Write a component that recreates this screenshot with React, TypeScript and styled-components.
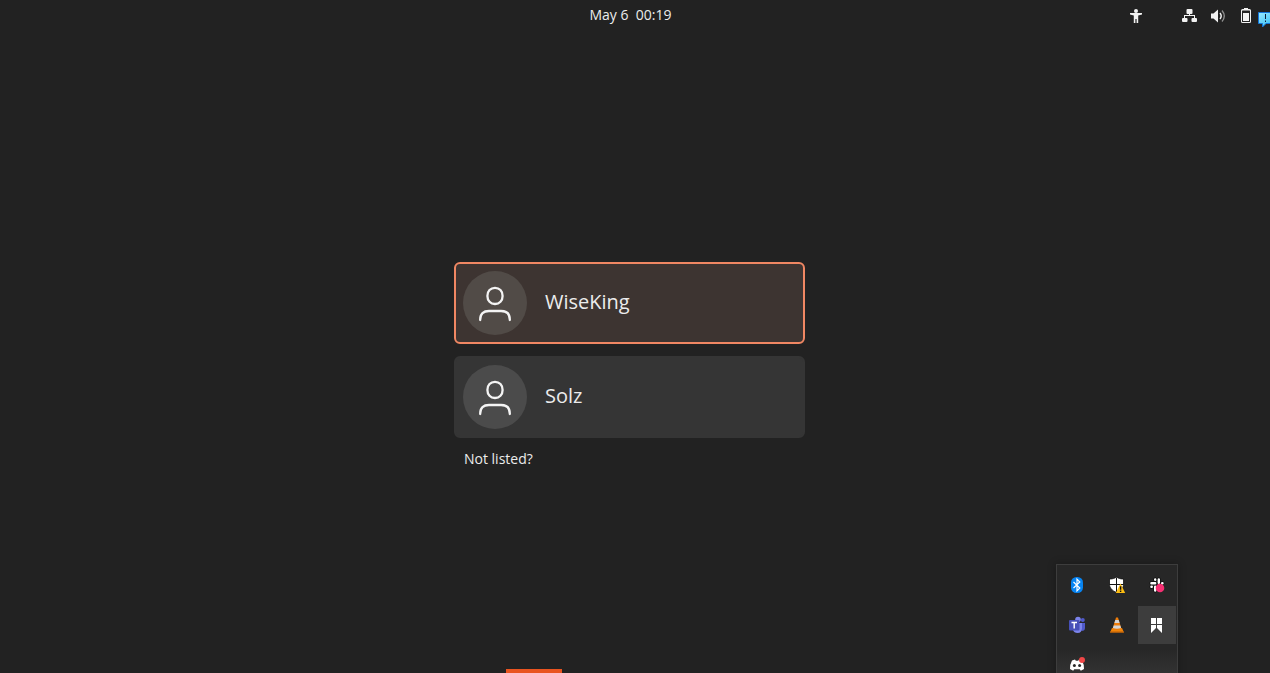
import React from "react";
import styled, { createGlobalStyle, css } from "styled-components";

const GlobalStyle = createGlobalStyle`
  * { box-sizing: border-box; }
  html, body { margin: 0; background: #222222; }
  body {
    font-family: "Open Sans", "Noto Sans", sans-serif;
    color: #ececec;
    overflow: hidden;
  }
  button { font: inherit; color: inherit; border: 0; padding: 0; background: none; cursor: pointer; }
`;

const Screen = styled.div`
  position: relative;
  display: flex;
  flex-direction: column;
  min-height: 100vh;
  overflow: hidden;
`;

const TopBar = styled.header`
  display: grid;
  grid-template-columns: 1fr auto 1fr;
  align-items: center;
  height: 32px;
`;

const Clock = styled.button`
  grid-column: 2;
  margin-right: 9px;
  padding-bottom: 2px;
  font-size: 14px;
  line-height: 28px;
  white-space: pre;
`;

const StatusArea = styled.div`
  display: flex;
  justify-content: flex-end;
  align-items: center;
  gap: 12px;
  padding-right: 16px;
`;

const StatusButton = styled.button<{ $spaced?: boolean }>`
  display: flex;
  margin-right: ${(p) => (p.$spaced ? "26px" : "0")};
`;

const Login = styled.main`
  flex: 1;
  display: flex;
  flex-direction: column;
  justify-content: center;
  align-items: center;
  padding: 25px 1px 0 0;
`;

const LoginColumn = styled.div`
  display: flex;
  flex-direction: column;
  gap: 12px;
  width: 100%;
  max-width: 351px;
  margin-right: 10px;
`;

const UserCard = styled.button<{ $selected?: boolean }>`
  display: flex;
  align-items: center;
  gap: 18px;
  height: 82px;
  padding: 0 7px;
  border: 2px solid #353535;
  border-radius: 6px;
  background: #353535;
  text-align: left;
  ${(p) =>
    p.$selected &&
    css`
      border-color: #f08763;
      background: #3d3431;
    `}
`;

const Avatar = styled.span<{ $selected?: boolean }>`
  display: flex;
  align-items: center;
  justify-content: center;
  width: 64px;
  height: 64px;
  border-radius: 50%;
  background: ${(p) => (p.$selected ? "#514b47" : "#4b4b4b")};
`;

const UserName = styled.span`
  padding-bottom: 3px;
  font-size: 20px;
  font-weight: 400;
  line-height: 28px;
`;

const NotListed = styled.button`
  align-self: flex-start;
  margin-left: 10px;
  font-size: 14px;
  line-height: 18px;
`;

const Tray = styled.div`
  position: absolute;
  right: 92px;
  bottom: -13px;
  display: grid;
  grid-template-columns: repeat(3, 38px);
  grid-auto-rows: 38px;
  gap: 2px;
  padding: 1px;
  border: 1px solid #3d3d3d;
  background: linear-gradient(#272727 84px, #333333 110px);
  box-shadow: 0 0 8px rgba(0, 0, 0, 0.3);
`;

const TrayButton = styled.button<{ $active?: boolean }>`
  display: flex;
  align-items: center;
  justify-content: center;
  background: ${(p) => (p.$active ? "#3d3d3d" : "transparent")};
`;

const Notice = styled.div`
  position: absolute;
  top: 11px;
  right: 0;
  width: 12px;
  height: 17px;
  overflow: hidden;
`;

const Accent = styled.div`
  position: absolute;
  bottom: 0;
  left: calc(50% - 129px);
  width: 56px;
  height: 4px;
  background: #e95420;
`;

const PersonIcon = () => (
  <svg width="36" height="40" viewBox="0 0 36 40" fill="none" stroke="#f4f4f4" strokeWidth="2.3" strokeLinecap="round">
    <path d="M18 4.800c4.500 0 7.600 3.400 7.600 8.100s-3.100 8.100-7.600 8.100-7.600-3.400-7.600-8.100 3.100-8.100 7.600-8.100z" />
    <path d="M3.200 37v-.4c0-6 3.200-8.600 8.800-8.600h12c5.600 0 8.800 2.600 8.800 8.600v.4" />
  </svg>
);

const AccessIcon = () => (
  <svg width="16" height="16" viewBox="0 0 16 16" fill="#f2f2f2">
    <circle cx="8" cy="3" r="2" />
    <path d="M2 5h12v1.500L10.200 7.500V15H8.600v-4H7.400v4H5.800V7.500L2 6.500z" />
  </svg>
);

const NetworkIcon = () => (
  <svg width="16" height="16" viewBox="0 0 16 16" fill="#f2f2f2">
    <rect x="4.500" y="1" width="6" height="5" rx="1" />
    <rect x="0" y="10" width="5.500" height="4" rx="1" />
    <rect x="9.500" y="10" width="5.500" height="4" rx="1" />
    <path d="M7 5h1v2h5v3.500h-1V8H3v2.500H2V7h5z" />
  </svg>
);

const VolumeIcon = () => (
  <svg width="16" height="16" viewBox="0 0 16 16" fill="none">
    <path d="M1 5.500h2.500L8 1.500v13l-4.500-4H1z" fill="#f2f2f2" />
    <path d="M10 5q2.400 3 0 6" stroke="#f2f2f2" strokeWidth="1.400" />
    <path d="M12 2.500q4.600 5.500 0 11" stroke="#909090" strokeWidth="1.300" />
  </svg>
);

const BatteryIcon = () => (
  <svg width="16" height="16" viewBox="0 0 16 16">
    <path d="M6 0h4v1h1.500Q13 1 13 2.500v11Q13 15 11.500 15h-7Q3 15 3 13.500v-11Q3 1 4.500 1H6z" fill="#f2f2f2" />
    <rect x="4" y="2.500" width="8" height="11.500" rx=".5" fill="#222" />
    <rect x="5" y="5" width="6" height="8" fill="#f2f2f2" />
  </svg>
);

const NoticeIcon = () => (
  <svg width="20" height="17" viewBox="0 0 20 17">
    <defs>
      <linearGradient id="bubble" x1="0" y1="0" x2="1" y2="1">
        <stop offset="0" stopColor="#9aeaff" />
        <stop offset="0.800" stopColor="#36bff5" />
      </linearGradient>
    </defs>
    <path d="M.5 1.500h19v11H8l-3.500 3.500v-3.500H.5z" fill="url(#bubble)" stroke="#1474d8" />
    <path d="M7 3h1v5H7zM7 9.500h1V11H7z" fill="#10203c" />
  </svg>
);

const BluetoothIcon = () => (
  <svg width="18" height="18" viewBox="0 0 18 18">
    <rect x="3" y="1" width="12" height="16" rx="5.500" fill="#0784f2" />
    <path d="M5.500 6l6.300 6L9 14.800V3.200L11.800 6l-6.300 6" fill="none" stroke="#fff" strokeWidth="1.200" />
  </svg>
);

const ShieldIcon = () => (
  <svg width="18" height="18" viewBox="0 0 18 18">
    <path d="M8.500 1c2 1.500 4 2 7 2v5c0 4-2.500 6.500-7 8.500-4.500-2-7-4.500-7-8.500V3c3 0 5-.5 7-2z" fill="#fff" stroke="#111" strokeWidth=".8" />
    <path d="M8.500 1.500V16M1.500 8.500h14" stroke="#111" strokeWidth="1" />
    <path d="M12.500 7.500L17.200 17H7.800z" fill="#fdbd12" />
    <path d="M11.900 10.200h1.400v3.600h-1.400zM11.900 14.600h1.400V16h-1.400z" fill="#111" />
  </svg>
);

const SlackIcon = () => (
  <svg width="18" height="18" viewBox="0 0 18 18">
    <g stroke="#0d0d0d" strokeWidth="3.800" strokeLinecap="round">
      <path d="M7.200 3.400h.1M10.800 3.400v3.400M3.400 7.200h3.800M14.400 7.200h.1M3.400 10.800h.1M7.200 10.800v3.800" />
    </g>
    <g stroke="#fff" strokeWidth="2.400" strokeLinecap="round">
      <path d="M7.200 3.400v.4M10.800 3.400v3.400M3.400 7.200h3.800M14.200 7.200h.3M3.400 10.800h.4M7.200 10.800v3.800" />
    </g>
    <circle cx="12" cy="12" r="4.300" fill="#f62f72" />
  </svg>
);

const TeamsIcon = () => (
  <svg width="18" height="18" viewBox="0 0 18 18">
    <circle cx="14.800" cy="4" r="2" fill="#5059c9" />
    <circle cx="10" cy="3.500" r="2.800" fill="#7b83eb" />
    <path d="M12 7h5v5q0 3-3.500 3z" fill="#5059c9" />
    <path d="M6 7h8v5q0 5-4.500 5Q6 17 5 14z" fill="#7b83eb" />
    <rect x="1" y="4" width="10.500" height="10.500" rx="1" fill="#4750b8" />
    <path d="M3.500 6.500h5.500M6.200 6.500v6" stroke="#fff" strokeWidth="1.400" />
  </svg>
);

const ConeIcon = () => (
  <svg width="18" height="18" viewBox="0 0 18 18">
    <path d="M4 12h10l2 4.500H2z" fill="#f18408" />
    <path d="M8 1.500h2L13.500 13q-4.500 2-9 0z" fill="#ee7d0a" />
    <path d="M7.300 4h3.400l.9 3H6.400zM5.700 9.500h6.600l.8 2.500q-4.100 1.600-8.200 0z" fill="#d4d4d4" />
    <path d="M2 16h14" stroke="#b75c08" />
  </svg>
);

const BookmarkIcon = () => (
  <svg width="18" height="18" viewBox="0 0 18 18" fill="#fff">
    <path d="M3 2H8V8H3zM9 2H14V8H9zM3 9H8V12L3 17zM9 9H14V17L9 12z" />
  </svg>
);

const DiscordIcon = () => (
  <svg width="18" height="18" viewBox="0 0 18 18">
    <path d="M4 4.500l3-1 .8 1.200h2.400L11 3.500l3 1q2.300 4.200 2 8.500l-3.200 1.700-1-1.500H6.200l-1 1.500L2 13q-.3-4.300 2-8.500z" fill="#fff" />
    <circle cx="6.400" cy="9.500" r="1.500" fill="#292929" />
    <circle cx="11.600" cy="9.500" r="1.500" fill="#292929" />
    <circle cx="14" cy="4" r="3" fill="#f04747" />
  </svg>
);

const users = ["WiseKing", "Solz"];

const trayItems = [
  { label: "Bluetooth", Icon: BluetoothIcon },
  { label: "Security", Icon: ShieldIcon },
  { label: "Slack", Icon: SlackIcon },
  { label: "Teams", Icon: TeamsIcon },
  { label: "Media player", Icon: ConeIcon },
  { label: "Bookmarks", Icon: BookmarkIcon, active: true },
  { label: "Discord", Icon: DiscordIcon },
];

export default function App() {
  return (
    <Screen>
      <GlobalStyle />
      <TopBar>
        <Clock>{"May 6  00:19"}</Clock>
        <StatusArea>
          <StatusButton $spaced aria-label="Accessibility"><AccessIcon /></StatusButton>
          <StatusButton aria-label="Network"><NetworkIcon /></StatusButton>
          <StatusButton aria-label="Volume"><VolumeIcon /></StatusButton>
          <StatusButton aria-label="Battery"><BatteryIcon /></StatusButton>
        </StatusArea>
      </TopBar>
      <Login>
        <LoginColumn>
          {users.map((name, i) => (
            <UserCard key={name} $selected={i === 0}>
              <Avatar $selected={i === 0}><PersonIcon /></Avatar>
              <UserName>{name}</UserName>
            </UserCard>
          ))}
          <NotListed>Not listed?</NotListed>
        </LoginColumn>
      </Login>
      <Notice><NoticeIcon /></Notice>
      <Accent />
      <Tray>
        {trayItems.map(({ label, Icon, active }) => (
          <TrayButton key={label} aria-label={label} $active={active}><Icon /></TrayButton>
        ))}
      </Tray>
    </Screen>
  );
}
